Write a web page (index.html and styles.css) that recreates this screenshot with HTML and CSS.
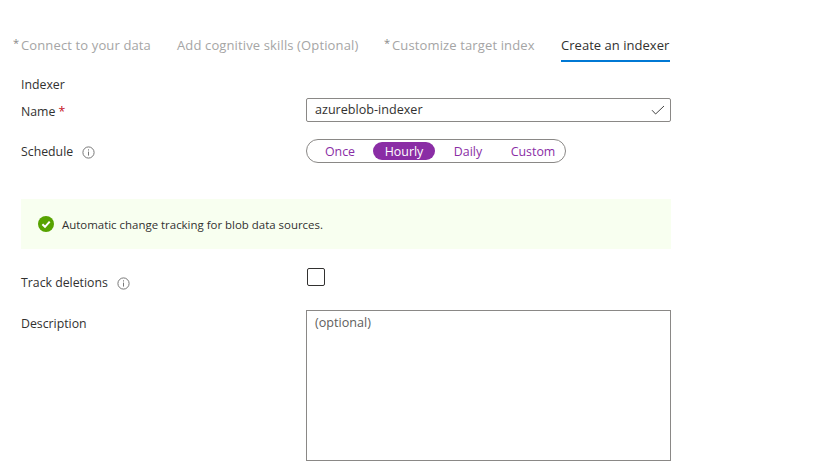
FILE: index.html
```html
<!DOCTYPE html>
<html lang="en">
<head>
<meta charset="utf-8">
<title>Create an indexer</title>
<link rel="stylesheet" href="styles.css">
</head>
<body>
<nav class="tabs">
  <div class="tab tab-first"><span class="req">*</span><span class="tab-label">Connect to your data</span></div>
  <div class="tab tab-second"><span class="tab-label">Add cognitive skills (Optional)</span></div>
  <div class="tab tab-third"><span class="req">*</span><span class="tab-label">Customize target index</span></div>
  <div class="tab tab-active"><span class="tab-label">Create an indexer</span></div>
</nav>
<main class="form">
  <div class="heading">Indexer</div>
  <div class="row row-name">
    <div class="label"><span>Name <span class="star">*</span></span></div>
    <div class="input">
      <span>azureblob-indexer</span>
      <svg class="check" width="14" height="10" viewBox="0 0 14 10"><path d="M1 5.2 4.6 9 13 1" fill="none" stroke="#444" stroke-width="1"/></svg>
    </div>
  </div>
  <div class="row row-schedule">
    <div class="label"><span>Schedule</span>
      <svg class="info" width="13" height="13" viewBox="0 0 13 13"><circle cx="6.5" cy="6.5" r="5.6" fill="none" stroke="#777" stroke-width="1"/><path d="M6.5 5.6v4M6.5 3.3v1.2" stroke="#777" stroke-width="1"/></svg>
    </div>
    <div class="pills">
      <span class="pill p-once">Once</span>
      <span class="pill pill-on">Hourly</span>
      <span class="pill p-daily">Daily</span>
      <span class="pill p-custom">Custom</span>
    </div>
  </div>
  <div class="banner">
    <svg width="16" height="16" viewBox="0 0 16 16"><circle cx="8" cy="8" r="8" fill="#57a300"/><path d="M4.4 8.2 7 10.8 11.7 5.6" fill="none" stroke="#fff" stroke-width="2"/></svg>
    <span>Automatic change tracking for blob data sources.</span>
  </div>
  <div class="row row-track">
    <div class="label"><span>Track deletions</span>
      <svg class="info" width="13" height="13" viewBox="0 0 13 13"><circle cx="6.5" cy="6.5" r="5.6" fill="none" stroke="#777" stroke-width="1"/><path d="M6.5 5.6v4M6.5 3.3v1.2" stroke="#777" stroke-width="1"/></svg>
    </div>
    <div class="checkbox"></div>
  </div>
  <div class="row row-desc">
    <div class="label"><span>Description</span></div>
    <div class="textarea">(optional)</div>
  </div>
</main>
</body>
</html>
```
FILE: styles.css
```css
* { box-sizing: border-box; }
html, body { margin: 0; height: 472px; overflow: hidden; background: #fff; }
body { font-family: "Open Sans", "Noto Sans", sans-serif; font-size: 12.3px; color: #323130; }
.tabs { display: flex; height: 63px; padding: 29px 0 0 13px; color: #a5a5a5; font-size: 13px; letter-spacing: 0.13px; }
.tab { display: flex; height: 33px; padding-top: 6px; line-height: 20px; white-space: nowrap; }
.req { width: 8px; color: #888; font-size: 11px; line-height: 16px; }
.tab-label { display: block; }
.tab-first { width: 164px; }
.tab-second { width: 207px; }
.tab-third { width: 177px; }
.tab-active { width: 109px; color: #323130; border-bottom: 2px solid #0078d4; letter-spacing: 0.03px; }
.form { width: 650px; margin-left: 21px; padding-top: 12px; }
.heading { height: 20px; line-height: 20px; }
.row { display: grid; grid-template-columns: 285px 365px; }
.label { display: flex; line-height: 20px; align-items: center; height: 20px; white-space: nowrap; }
.star { color: #c50f1f; }
.info { margin-left: 9px; }
.row-name { margin-top: 3px; }
.row-name .label { margin-top: 4px; }
.input { height: 24px; border: 1px solid #8a8886; border-radius: 2px; padding: 0 8px 2px; display: flex; align-items: center; justify-content: space-between; color: #323130; font-size: 12.6px; }
.check { margin-right: -3px; margin-top: 2px; }
.row-schedule { margin-top: 17px; }
.row-schedule .label { margin-top: 3px; }
.pills { width: 260px; height: 24px; border: 1px solid #8a8886; border-radius: 12px; display: flex; align-items: center; padding-left: 4px; color: #8a2da5; font-size: 12.4px; }
.pill { height: 18px; line-height: 19px; border-radius: 9px; text-align: center; }
.p-once { width: 62px; padding-right: 4px; }
.pill-on { width: 62px; background: #8a2da5; color: #fff; }
.p-daily { width: 66px; }
.p-custom { width: 64px; }
.banner { height: 50px; margin-top: 36px; background: #f8fff0; display: flex; align-items: center; gap: 8px; padding-left: 17px; font-size: 11.45px; }
.row-track { margin-top: 19px; }
.row-track .label { margin-top: 5px; }
.checkbox { width: 18px; height: 18px; margin-left: 1px; border: 1px solid #323130; border-radius: 2px; }
.row-desc { margin-top: 17px; }
.row-desc .label { margin-top: 4px; }
.textarea { height: 151px; border: 1px solid #8a8886; padding: 2px 8px; line-height: 20px; color: #605e5c; font-size: 12.6px; }
```
